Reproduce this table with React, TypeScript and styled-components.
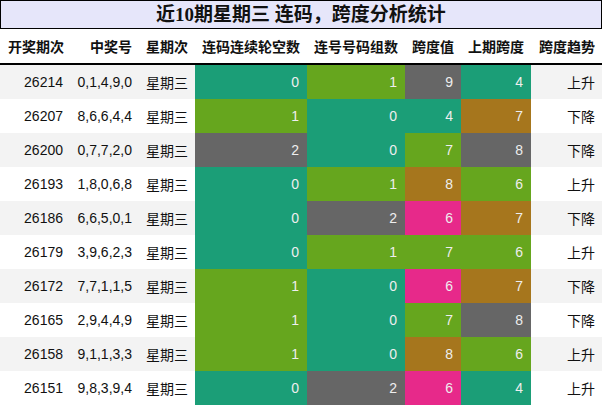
import { FC } from 'react';
import styled, { createGlobalStyle } from 'styled-components';

const GlobalStyle = createGlobalStyle`
  html, body {
    margin: 0;
    padding: 0;
    background: #fff;
  }
`;

const palette = {
  teal: '#1b9e77',
  green: '#66a61e',
  gray: '#666666',
  pink: '#e7298a',
  brown: '#a6761d',
};

type Tone = keyof typeof palette;

interface Row {
  issue: string;
  nums: string;
  day: string;
  gap: [number, Tone];
  pairs: [number, Tone];
  span: [number, Tone];
  prev: [number, Tone];
  trend: string;
}

const rows: Row[] = [
  { issue: '26214', nums: '0,1,4,9,0', day: '星期三', gap: [0, 'teal'], pairs: [1, 'green'], span: [9, 'gray'], prev: [4, 'teal'], trend: '上升' },
  { issue: '26207', nums: '8,6,6,4,4', day: '星期三', gap: [1, 'green'], pairs: [0, 'teal'], span: [4, 'teal'], prev: [7, 'brown'], trend: '下降' },
  { issue: '26200', nums: '0,7,7,2,0', day: '星期三', gap: [2, 'gray'], pairs: [0, 'teal'], span: [7, 'green'], prev: [8, 'gray'], trend: '下降' },
  { issue: '26193', nums: '1,8,0,6,8', day: '星期三', gap: [0, 'teal'], pairs: [1, 'green'], span: [8, 'brown'], prev: [6, 'green'], trend: '上升' },
  { issue: '26186', nums: '6,6,5,0,1', day: '星期三', gap: [0, 'teal'], pairs: [2, 'gray'], span: [6, 'pink'], prev: [7, 'brown'], trend: '下降' },
  { issue: '26179', nums: '3,9,6,2,3', day: '星期三', gap: [0, 'teal'], pairs: [1, 'green'], span: [7, 'green'], prev: [6, 'green'], trend: '上升' },
  { issue: '26172', nums: '7,7,1,1,5', day: '星期三', gap: [1, 'green'], pairs: [0, 'teal'], span: [6, 'pink'], prev: [7, 'brown'], trend: '下降' },
  { issue: '26165', nums: '2,9,4,4,9', day: '星期三', gap: [1, 'green'], pairs: [0, 'teal'], span: [7, 'green'], prev: [8, 'gray'], trend: '下降' },
  { issue: '26158', nums: '9,1,1,3,3', day: '星期三', gap: [1, 'green'], pairs: [0, 'teal'], span: [8, 'brown'], prev: [6, 'green'], trend: '上升' },
  { issue: '26151', nums: '9,8,3,9,4', day: '星期三', gap: [0, 'teal'], pairs: [2, 'gray'], span: [6, 'pink'], prev: [4, 'teal'], trend: '上升' },
];

const headers = ['开奖期次', '中奖号', '星期次', '连码连续轮空数', '连号号码组数', '跨度值', '上期跨度', '跨度趋势'];
const widths = [70, 69, 56, 112, 98, 56, 70, 71];

const Table = styled.table`
  width: 602px;
  table-layout: fixed;
  border-collapse: separate;
  border-spacing: 0;
  font-family: 'Liberation Sans', 'Noto Sans CJK SC', sans-serif;
  font-size: 14px;
  color: #111;
`;

const Caption = styled.caption`
  height: 27px;
  line-height: 27px;
  border: 1px solid #000;
  background: #e6e6fa;
  font-family: 'Liberation Serif', 'Noto Sans CJK SC', serif;
  font-weight: 700;
  font-size: 19px;
  color: #111;
  text-align: center;
`;

const HeadCell = styled.th`
  height: 34px;
  padding: 0 7px 0 0;
  border-bottom: 2px solid #000;
  background: #fff;
  font-family: 'Noto Sans CJK SC', sans-serif;
  font-weight: 700;
  font-size: 14px;
  text-align: right;
  white-space: nowrap;
  &:first-child {
    text-align: left;
    padding-left: 8px;
  }
`;

const BodyRow = styled.tr<{ $odd: boolean }>`
  background: ${p => (p.$odd ? '#f3f3f3' : '#fff')};
`;

const Cell = styled.td`
  height: 34px;
  padding: 0 7px 0 0;
  text-align: right;
  white-space: nowrap;
`;

const ToneCell = styled(Cell)<{ $tone: Tone }>`
  background: ${p => palette[p.$tone]};
  color: #eeeeee;
  padding-right: 8px;
`;

const App: FC = () => (
  <>
    <GlobalStyle />
    <Table>
      <Caption>近10期星期三 连码，跨度分析统计</Caption>
      <colgroup>
        {widths.map((w, i) => (
          <col key={i} style={{ width: w }} />
        ))}
      </colgroup>
      <thead>
        <tr>
          {headers.map(h => (
            <HeadCell key={h}>{h}</HeadCell>
          ))}
        </tr>
      </thead>
      <tbody>
        {rows.map((r, i) => (
          <BodyRow key={r.issue} $odd={i % 2 === 0}>
            <Cell>{r.issue}</Cell>
            <Cell>{r.nums}</Cell>
            <Cell>{r.day}</Cell>
            <ToneCell $tone={r.gap[1]}>{r.gap[0]}</ToneCell>
            <ToneCell $tone={r.pairs[1]}>{r.pairs[0]}</ToneCell>
            <ToneCell $tone={r.span[1]}>{r.span[0]}</ToneCell>
            <ToneCell $tone={r.prev[1]}>{r.prev[0]}</ToneCell>
            <Cell>{r.trend}</Cell>
          </BodyRow>
        ))}
      </tbody>
    </Table>
  </>
);

export default App;
